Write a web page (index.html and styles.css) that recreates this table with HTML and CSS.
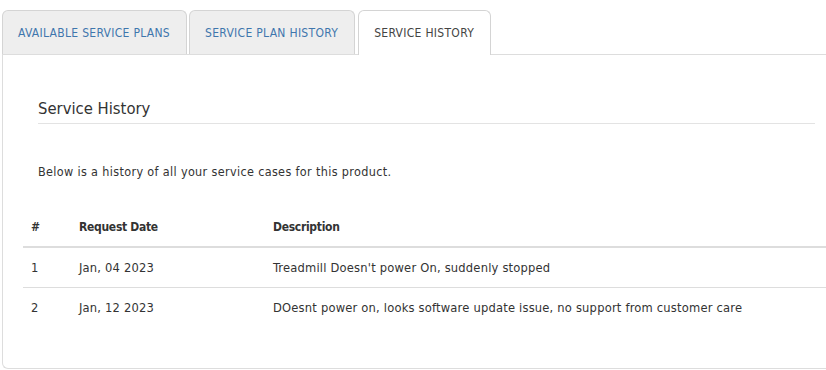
FILE: index.html
```html
<!DOCTYPE html>
<html lang="en">
<head>
    <meta charset="UTF-8">
    <meta name="viewport" content="width=device-width, initial-scale=1.0">
    <title>Service History</title>
    <link rel="stylesheet" href="styles.css">
</head>
<body>
    <div id="product-tabs">
        <ul class="tab-list">
            <li class="tab">Available Service Plans</li>
            <li class="tab">Service Plan History</li>
            <li class="tab active">Service History</li>
        </ul>
        <div class="tab-panel">
            <div class="panel-head">
                <h2>Service History</h2>
            </div>
            <p class="intro">Below is a history of all your service cases for this product.</p>
            <table class="history-table">
                <thead>
                    <tr>
                        <th class="col-num">#</th>
                        <th class="col-date">Request Date</th>
                        <th>Description</th>
                    </tr>
                </thead>
                <tbody>
                    <tr>
                        <td>1</td>
                        <td>Jan, 04 2023</td>
                        <td>Treadmill Doesn't power On, suddenly stopped</td>
                    </tr>
                    <tr>
                        <td>2</td>
                        <td>Jan, 12 2023</td>
                        <td>DOesnt power on, looks software update issue, no support from customer care</td>
                    </tr>
                </tbody>
            </table>
        </div>
    </div>
</body>
</html>
```

FILE: styles.css
```css
* {box-sizing: border-box;}
body {
    margin: 0;
    color: #333;
    font-family: "DejaVu Sans Condensed", "Liberation Sans", sans-serif;
    background: #fff;
    overflow: hidden;
}
ul {list-style: none; margin: 0; padding: 0;}

#product-tabs {padding: 10px 0 0 2px;}

.tab-list {
    display: flex;
    gap: 2px;
    position: relative;
    z-index: 1;
}
.tab {
    height: 44px;
    line-height: 44px;
    padding: 0 16px 0 15px;
    border: 1px solid #d4d4d4;
    border-bottom: none;
    border-radius: 6px 6px 0 0;
    background: #eee;
    color: #3f76ad;
    font-size: 12px;
    letter-spacing: 0.3px;
    text-transform: uppercase;
}
.tab.active {
    height: 45px;
    margin-bottom: -1px;
    margin-left: 1px;
    background: #fff;
    color: #444;
}

.tab-panel {
    padding: 44px 0 41px 20px;
    border: 1px solid #ddd;
    border-right: none;
    border-radius: 0 0 0 6px;
}

.panel-head {
    margin: 0 11px 0 15px;
    border-bottom: 1px solid #e3e3e3;
}
.panel-head h2 {
    margin: 0;
    padding-bottom: 5px;
    font-size: 16.5px;
    font-weight: normal;
    color: #333;
}

.intro {
    margin: 40px 0 0 15px;
    font-size: 12.5px;
    letter-spacing: 0.35px;
}

.history-table {
    width: 100%;
    margin-top: 29px;
    border-collapse: collapse;
    font-size: 12.8px;
    letter-spacing: 0.2px;
}
.history-table th {
    height: 39px;
    padding: 0 8px;
    border-bottom: 2px solid #ddd;
    text-align: left;
    font-size: 12px;
    font-weight: bold;
    letter-spacing: -0.3px;
}
.history-table td {
    height: 40px;
    padding: 0 8px;
    border-top: 1px solid #ddd;
}
.history-table tbody tr:first-child td {border-top: none;}
.col-num {width: 48px;}
.col-date {width: 194px;}
```
